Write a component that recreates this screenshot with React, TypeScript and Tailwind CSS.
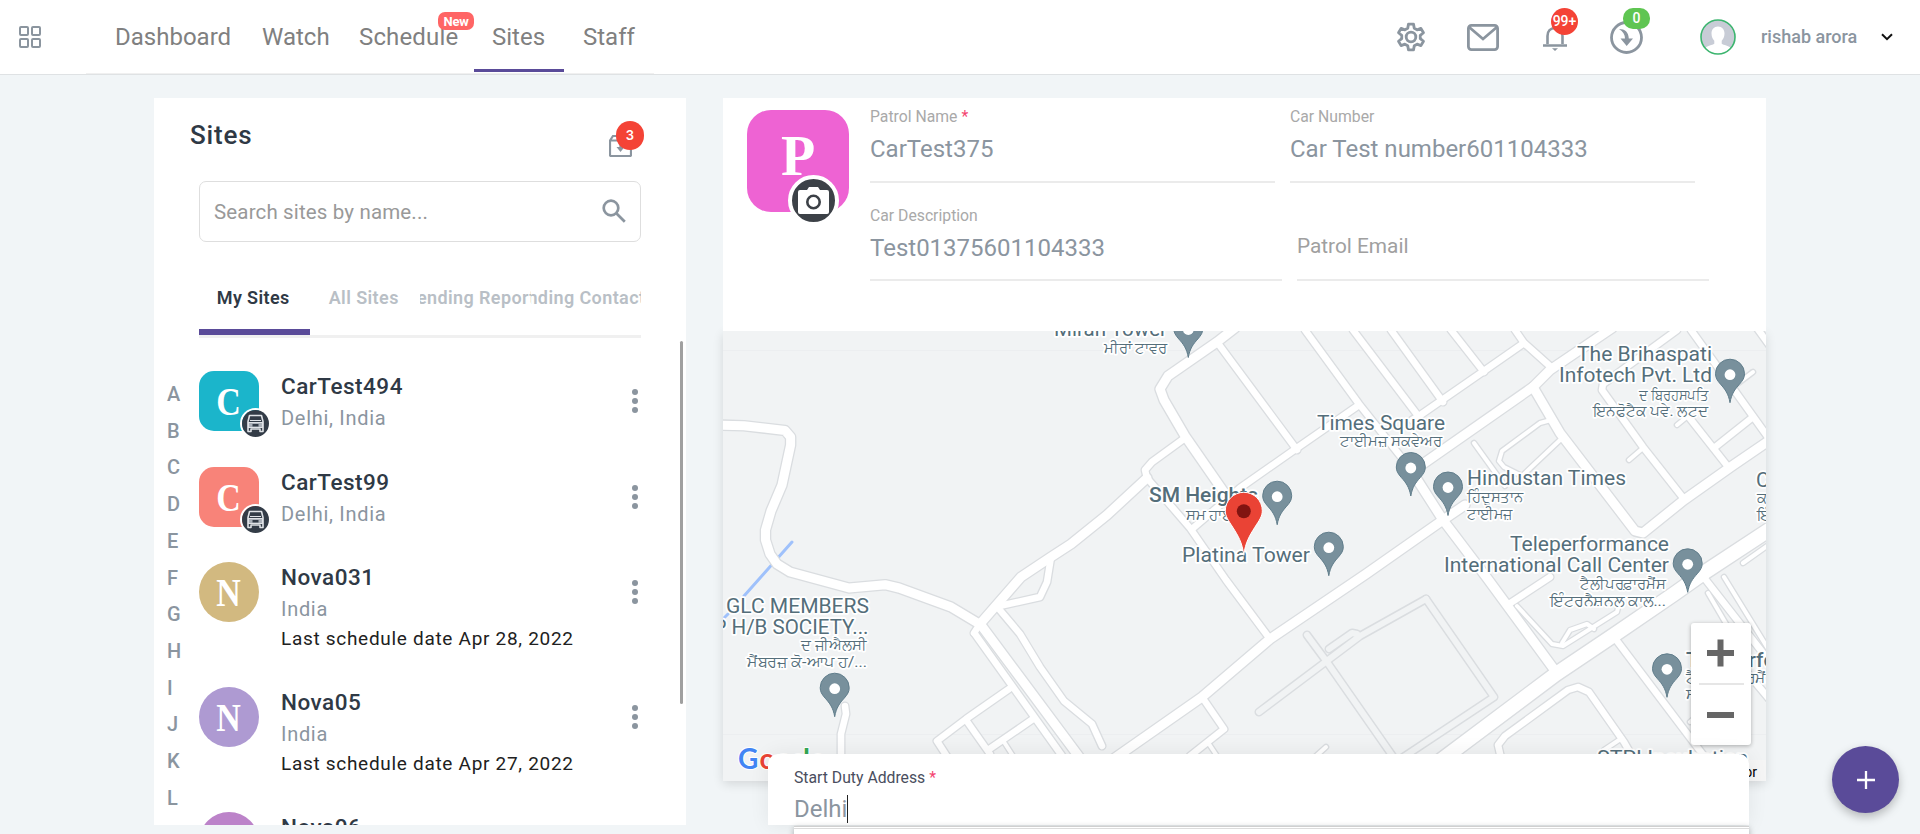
import React from "react";

const ROADS: { w: number; pts: string[] }[] = [
  {
    w: 4,
    pts: [
      "1474,443 1505,486",
      "1629,460 1643,448",
      "1677,425 1688,416",
      "1753,372 1737,384",
      "1743,563 1770,544",
      "1326,747 1316,756",
      "1560,430 1551,420 1540,423 1502,451 1499,461 1504,467 1522,476 1560,440",
      "1708,593 1732,634",
      "1724,577 1775,660",
      "1690,722 1706,708",
      "1604,750 1622,738",
      "1517,606 1552,644 1563,646 1617,612 1619,604",
      "1562,643 1570,630 1587,624 1594,629",
      "1209,744 1217,756",
      "1004,742 1013,756",
    ],
  },
  {
    w: 6.5,
    pts: [
      "845,706 846,714 841,734 841,760",
      "1009,689 966,719 937,741 948,758",
      "966,720 990,754",
      "1033,719 988,750",
      "1202,697 1224,729 1190,756",
      "995,607 1040,597 1047,582 1051,557",
      "999,609 1020,634 1040,667 1064,701 1092,724 1102,746",
      "975,634 1065,760",
      "980,624 974,633",
      "1185,438 1152,462 1145,470 1147,478",
      "1192,529 1240,488 1297,448 1359,405",
      "1217,342 1297,450",
      "1147,478 1190,528 1226,580 1270,639",
      "1305,330 1359,404 1409,467",
      "1353,330 1419,417",
      "1391,330 1443,402",
      "1451,330 1484,372",
      "1515,330 1524,343 1552,368",
      "1524,343 1481,373 1419,416 1412,420",
      "1677,330 1603,384 1602,390 1643,447 1684,499",
      "1691,330 1732,387 1770,440",
      "1688,416 1729,468",
      "1753,417 1714,448",
      "1757,328 1770,346",
      "1550,577 1509,604",
      "1614,637 1682,727 1704,756",
      "1501,758 1498,745 1505,736 1568,690 1578,687 1589,692 1624,742 1632,756",
      "1702,575 1770,662",
      "1720,640 1770,700",
    ],
  },
  {
    w: 9,
    pts: [
      "718,425 744,425.7 785,430.5 790.6,437 790.6,445 782,485 771,511 765.5,530 765.5,540 770,554 777,564 790,572 849,588 885,584.7 899,588 951,607 981,625",
      "1235,328 1217,342 1168,376 1160,389 1164,400 1185,436 1228,498",
      "980,624 1021,577 1051,557 1071,544 1107,515 1147,478",
      "981,625 1080,758",
      "1612,328 1550,370 1533,387 1420,466",
      "1533,387 1560,433 1635,531 1643,533 1684,500 1732,466 1770,440",
      "1409,467 1443,520 1487,578 1556,672",
      "1465,505 1443,520 1366,574 1270,639 1202,697 1112,760",
    ],
  },
  { w: 14, pts: ["1440,761 1556,674 1614,635 1674,594 1705,572 1775,526"] },
];

const LANES = [
  "1426,599 1360,636 1259,712",
  "1307,635 1327,662 1394,758",
  "1426,599 1494,697 1402,758",
  "1357,634 1352,633 1329,649",
];

const PINS: [number, number][] = [
  [1410.8, 468],
  [1448, 487.5],
  [1277.2, 496.7],
  [1328.8, 547.7],
  [1730, 374.7],
  [1687.7, 564.3],
  [834.7, 688.7],
  [1667, 669.3],
  [1188.3, 329.5],
];

type Label = { t: string; x: number; y: number; w?: number; s?: number; b?: boolean };
const LABELS: Label[] = [
  { t: "Miran Tower", x: 1054, y: 335.5, w: 113 },
  { t: "ਮੀਰਾਂ ਟਾਵਰ", x: 1104, y: 352.5, w: 63, s: 15 },
  { t: "SM Heights", x: 1149, y: 502, w: 109, b: true },
  { t: "ਸਮ ਹਾਈਟਸ", x: 1186, y: 519.5, w: 70, s: 15 },
  { t: "Platina Tower", x: 1182, y: 561.5, w: 128 },
  { t: "Times Square", x: 1317, y: 430, w: 128 },
  { t: "ਟਾਈਮਜ਼ ਸਕਵੇਅਰ", x: 1340, y: 446, w: 102, s: 15 },
  { t: "Hindustan Times", x: 1467, y: 485, w: 159 },
  { t: "ਹਿੰਦੁਸਤਾਨ", x: 1467, y: 502, w: 56, s: 15 },
  { t: "ਟਾਈਮਜ਼", x: 1467, y: 518.5, w: 46, s: 15 },
  { t: "The Brihaspati", x: 1577, y: 361, w: 135 },
  { t: "Infotech Pvt. Ltd", x: 1559, y: 382, w: 153 },
  { t: "ਦ ਬ੍ਰਿਹਸਪਤਿ", x: 1639, y: 399.5, w: 70, s: 15 },
  { t: "ਇਨਫੋਟੈਕ ਪਵੇ. ਲਟਦ", x: 1593, y: 416, w: 115, s: 15 },
  { t: "Teleperformance", x: 1510, y: 551, w: 159 },
  { t: "International Call Center", x: 1444, y: 572, w: 225 },
  { t: "ਟੈਲੀਪਰਫ਼ਾਰਮੈਂਸ", x: 1580, y: 589, w: 86, s: 15 },
  { t: "ਇੰਟਰਨੈਸ਼ਨਲ ਕਾਲ...", x: 1550, y: 605.5, w: 116, s: 15 },
  { t: "GLC MEMBERS", x: 726, y: 613, w: 143 },
  { t: "P", x: 713.5, y: 634 },
  { t: "H/B SOCIETY...", x: 731.5, y: 634, w: 137 },
  { t: "ਦ ਜੀਐਲਸੀ", x: 801, y: 650, w: 66, s: 15 },
  { t: "ਮੈਂਬਰਜ਼ ਕੋ-ਆਪ ਹ/...", x: 747, y: 667, w: 120, s: 15 },
  { t: "Co", x: 1756, y: 486.5 },
  { t: "ਕਨ", x: 1757, y: 503, s: 15 },
  { t: "ਇੰਡ", x: 1757, y: 520, s: 15 },
  { t: "Teleperformance", x: 1686, y: 666.5, w: 160, b: true },
  { t: "ਟੈਲੀਪਰਫ਼ਾਰਮੈਂਸ", x: 1686, y: 683, w: 90, s: 15 },
  { t: "ਸਰਵਿਸ", x: 1686, y: 699, s: 15 },
  { t: "STPI Incubation", x: 1597, y: 764.5, w: 151 },
];

function CityMap() {
  return (
    <svg viewBox="723 331 1043 450" width="1043" height="450" className="block">
      <rect x="723" y="331" width="1043" height="450" fill="#f1f3f4" />
      <path d="M723 350.5H1766M723 734.5H1766" stroke="#eceef0" />
      <g fill="none" stroke="#9fc1fb" strokeWidth="3" strokeLinecap="round">
        <path d="M792 542L744 596M728 614L724 618" />
      </g>
      <g fill="none" strokeLinejoin="round" strokeLinecap="round">
        {LANES.map((p) => (
          <polyline key={p} points={p} stroke="#dadde0" strokeWidth="9" />
        ))}
        {LANES.map((p) => (
          <polyline key={p} points={p} stroke="#f1f3f4" strokeWidth="6" />
        ))}
        {ROADS.map((r) =>
          r.pts.map((p) => <polyline key={p} points={p} stroke="#dadde0" strokeWidth={r.w + 2.6} />)
        )}
        {ROADS.map((r) => r.pts.map((p) => <polyline key={p} points={p} stroke="#ffffff" strokeWidth={r.w} />))}
      </g>
      {PINS.map(([x, y]) => (
        <g key={`${x}`} transform={`translate(${x} ${y})`}>
          <path
            d="M0 28C-1.500 19 -5 14.500 -9.500 9.500C-13 5.500 -14.500 3 -14.500 -1A14.500 14.500 0 0 1 14.500 -1C14.500 3 13 5.500 9.500 9.500C5 14.500 1.500 19 0 28Z"
            fill="#78909c"
            stroke="#607d8b"
            strokeWidth="1"
          />
          <circle r="5.400" fill="#fff" />
        </g>
      ))}
      <g
        fill="#546e7a"
        stroke="#fff"
        strokeWidth="3.500"
        strokeLinejoin="round"
        paintOrder="stroke"
        fontFamily="Roboto, 'Noto Sans', sans-serif"
      >
        {LABELS.map((l) => (
          <text
            key={`${l.x},${l.y}`}
            x={l.x}
            y={l.y}
            fontSize={l.s ?? 20.5}
            fontWeight={l.b ? 500 : 400}
            textLength={l.w}
            lengthAdjust="spacingAndGlyphs"
          >
            {l.t}
          </text>
        ))}
      </g>
      <g transform="translate(1243.800 511.300)">
        <path
          d="M0 44C-1.500 31 -6 24 -11 16C-15.500 9 -18.500 5 -18.500 -0.500A18.500 18.500 0 0 1 18.500 -0.500C18.500 5 15.500 9 11 16C6 24 1.500 31 0 44Z"
          fill="#ea4335"
          stroke="#fff"
          strokeWidth="1"
        />
        <circle r="7" fill="#811411" />
      </g>
      <text x="738" y="769" fontFamily="Lato, sans-serif" fontSize="28" stroke="#fff" strokeWidth="2" paintOrder="stroke">
        <tspan fill="#4285f4" fontWeight="700">G</tspan>
        <tspan fill="#ea4335" fontWeight="700" x="759.500">o</tspan>
        <tspan fill="#fbbc04">o</tspan>
        <tspan fill="#4285f4">g</tspan>
        <tspan fill="#34a853" fontWeight="700" x="803">l</tspan>
        <tspan fill="#ea4335">e</tspan>
      </text>
      <rect x="1600" y="760" width="166" height="21" fill="#f5f5f5" />
      <text x="1757" y="777" textAnchor="end" fontFamily="Roboto, sans-serif" fontSize="14" fill="#000">
        Report a map error
      </text>
    </svg>
  );
}

function CarIcon() {
  return (
    <svg viewBox="0 0 27 27" className="h-[27px] w-[27px]">
      <circle cx="13.5" cy="13.500" r="13.500" fill="#333c47" />
      <path
        d="M7.500 5.500h12l1.500 6v10h-3v-2.500h-9v2.500h-3v-10z"
        fill="none"
        stroke="#dfe2e6"
        strokeWidth="1.600"
        strokeLinejoin="round"
      />
      <path d="M8 10.500h11M6.500 12.500h14v5h-14z" stroke="#dfe2e6" strokeWidth="1.200" fill="#aab0b8" />
      <rect x="10.500" y="14" width="6" height="2.500" fill="#333c47" />
    </svg>
  );
}

type Site = { name: string; sub: string; last?: string; letter: string; tone: string; row: string; car?: boolean };
const SITES: Site[] = [
  { name: "CarTest494", sub: "Delhi, India", letter: "C", tone: "bg-[#1bb5cb] rounded-[15px]", row: "h-24", car: true },
  { name: "CarTest99", sub: "Delhi, India", letter: "C", tone: "bg-[#f88379] rounded-[15px]", row: "h-[95px]", car: true },
  { name: "Nova031", sub: "India", last: "Last schedule date Apr 28, 2022", letter: "N", tone: "bg-[#d2b980] rounded-full", row: "h-[125px]" },
  { name: "Nova05", sub: "India", last: "Last schedule date Apr 27, 2022", letter: "N", tone: "bg-[#ae9ad2] rounded-full", row: "h-[125px]" },
  { name: "Nova06", sub: "India", letter: "N", tone: "bg-[#bc83c9] rounded-full", row: "h-[125px]" },
];

function SiteRow({ s }: { s: Site }) {
  return (
    <div className={`flex shrink-0 ${s.row}`}>
      <div className={`relative flex h-[60px] w-[60px] shrink-0 items-center justify-center ${s.tone}`}>
        <span className="mt-0.5 scale-x-[0.85] pr-0.5 font-['Liberation_Serif',serif] text-[40px] font-bold leading-none text-white">
          {s.letter}
        </span>
        {s.car && (
          <div className="absolute -bottom-[8px] -right-[12px] rounded-full border-2 border-white">
            <CarIcon />
          </div>
        )}
      </div>
      <div className="ml-[22px] flex-1">
        <div className="text-[22.500px] font-medium leading-[30px] tracking-[0.5px] text-[#2f3945]">{s.name}</div>
        <div className="mt-[2px] text-[20px] leading-[30px] tracking-[0.7px] text-[#8b959f]">{s.sub}</div>
        {s.last && <div className="text-[19px] leading-[30px] tracking-[0.7px] text-[#212121]">{s.last}</div>}
      </div>
      <div className="mr-[3px] mt-[18px] flex flex-col gap-[3px]">
        <i className="h-1.5 w-1.5 rounded-full bg-[#8b959f]" />
        <i className="h-1.5 w-1.5 rounded-full bg-[#8b959f]" />
        <i className="h-1.5 w-1.5 rounded-full bg-[#8b959f]" />
      </div>
    </div>
  );
}

function Header() {
  return (
    <header className="flex h-[75px] shrink-0 border-b border-[#dfe2e4] bg-white">
      <div className="flex w-[86px] items-center pl-[19px]">
        <svg viewBox="0 0 22 22" className="h-[22px] w-[22px]" fill="none" stroke="#8b959f" strokeWidth="2">
          <rect x="1" y="1" width="8" height="8" rx="1" />
          <rect x="13" y="1" width="8" height="8" rx="1" />
          <rect x="1" y="13" width="8" height="8" rx="1" />
          <rect x="13" y="13" width="8" height="8" rx="1" />
        </svg>
      </div>
      <nav className="flex h-[74px] w-[568px] border-b border-[#f0f0f0] text-[24px] leading-[74px] text-[#808080]">
        <span className="ml-[29px] w-[147px]">Dashboard</span>
        <span className="w-[97px]">Watch</span>
        <span className="relative w-[115px] tracking-[0.15px]">
          Schedule
          <b className="absolute left-[79px] top-3 flex h-[18px] w-9 items-center justify-center rounded-[7px] bg-[#ff6565] text-[13px] font-bold leading-none tracking-tight text-white">
            New
          </b>
        </span>
        <span className="h-[72px] w-[90px] border-b-[3px] border-[#5a4b99] pr-px text-center">Sites</span>
        <span className="ml-[19px]">Staff</span>
      </nav>
      <div className="ml-auto flex items-center pr-[27px]">
        <svg viewBox="0 0 24 24" className="h-[34px] w-[34px]" fill="none" stroke="#8b959f" strokeWidth="2">
          <path
            strokeLinejoin="round"
            d="M10.2 2h3.600l.5 2.900 2 1.100 2.700-1.050 1.800 3.100-2.250 1.850v2.300l2.250 1.850-1.800 3.100-2.700-1.050-2 1.100-.5 2.900h-3.600l-.5-2.900-2-1.100-2.700 1.050-1.800-3.100 2.250-1.850v-2.300L3.200 8.050 5 4.950 7.700 6l2-1.100z"
            transform="translate(0 .95)"
          />
          <circle cx="12" cy="12" r="3.400" />
        </svg>
        <svg viewBox="0 0 32 27" className="ml-[39px] mr-[44px] h-[27px] w-8" fill="none" stroke="#8b959f" strokeWidth="2.800">
          <rect x="1.400" y="1.400" width="29.200" height="24.200" rx="3" />
          <path d="M2 3l14 12L30 3" />
        </svg>
        <div className="relative h-[27px] w-6">
          <svg viewBox="0 0 24 27" className="h-[27px] w-6" fill="none" stroke="#8b959f" strokeWidth="2.600">
            <path d="M4.500 20v-8c0-5 3-8 7.500-8s7.500 3 7.500 8v8M0 21.500h24" />
            <path d="M9 24.300h6l-3 2.700z" fill="#8b959f" stroke="none" />
          </svg>
          <b className="absolute -top-[16px] left-2 flex h-[27px] w-[27px] items-center justify-center rounded-full bg-[#f44336] text-[14px] font-medium text-white">
            99+
          </b>
        </div>
        <div className="relative ml-[43px] h-[33px] w-[33px]">
          <svg viewBox="0 0 33 33" className="h-[33px] w-[33px]">
            <circle cx="16.500" cy="16.500" r="15" fill="none" stroke="#8b959f" strokeWidth="2.800" />
            <path d="M9 8c6 0 9.500 3 9.800 9.500h4.200l-6.300 7.500-6.200-7.500h4.500c0-4-2-7-6-9.500z" fill="#8b959f" />
          </svg>
          <b className="absolute -top-[13px] left-[13px] flex h-[21px] w-[27px] items-center justify-center rounded-[10px] bg-[#5fc552] text-[14px] font-medium text-white">
            0
          </b>
        </div>
        <svg viewBox="0 0 36 36" className="ml-[57px] h-9 w-9">
          <circle cx="18" cy="18" r="17" fill="#c8ccd6" />
          <path
            d="M18 7.500c4 0 6.500 3 6.500 7 0 3.500-1.500 6-2.800 7.300v3c2 1.500 7 1.700 8.800 4.200C27 33 23 35 18 35s-9-2-12.500-6c1.800-2.500 6.800-2.700 8.800-4.200v-3c-1.300-1.300-2.800-3.800-2.800-7.300 0-4 2.500-7 6.500-7z"
            fill="#fff"
          />
          <circle cx="18" cy="18" r="17" fill="none" stroke="#3cb56f" strokeWidth="1.600" />
        </svg>
        <span className="-mt-px ml-[25px] w-[96px] whitespace-nowrap text-[18px] font-medium text-[#8b959f]">rishab arora</span>
        <svg viewBox="0 0 12 8" className="ml-[24px] h-2 w-3" fill="none" stroke="#111" strokeWidth="2">
          <path d="M1 1.200l5 5 5-5" />
        </svg>
      </div>
    </header>
  );
}

function Field({ label, value, required, className }: { label: string; value: string; required?: boolean; className: string }) {
  return (
    <div className={`border-b-2 border-[#ebebeb] ${className}`}>
      <div className="text-[15.750px] leading-[20px] text-[#a9a9a9]">
        {label} {required && <span className="text-[#f44370]">*</span>}
      </div>
      <div className="mt-[8px] text-[24px] leading-[28px] text-[#8b959f]">{value}</div>
    </div>
  );
}

export default function App() {
  return (
    <div className="relative flex h-[834px] w-[1920px] flex-col overflow-hidden bg-[#f1f5f7] font-['Roboto',sans-serif]">
      <Header />
      <main className="flex pl-[154px] pt-[23px]">
        <section className="relative flex h-[727px] w-[532px] flex-col overflow-hidden bg-white">
          <div className="flex h-[83px] shrink-0 justify-between pl-9 pr-[54px] pt-[17px]">
            <h1 className="text-[26px] font-medium leading-[41px] tracking-[0.8px] text-[#2f3945]">Sites</h1>
            <div className="relative mt-[20px] h-[22px] w-[23px]">
              <svg viewBox="0 0 23 22" className="h-[22px] w-[23px]" fill="none" stroke="#8b959f" strokeWidth="2.200">
                <path d="M1 5.500V20a1 1 0 0 0 1 1h19a1 1 0 0 0 1-1V5.500M1 5.500L4 1h15l3 4.500zM11.500 9v3" />
                <path d="M7.500 12h8l-4 5z" fill="#8b959f" stroke="none" />
              </svg>
              <b className="absolute -top-[14px] left-[7px] flex h-[29px] w-[28px] items-center justify-center rounded-full bg-[#f44336] font-['Inter',sans-serif] text-[13px] font-semibold text-white">
                3
              </b>
            </div>
          </div>
          <div className="ml-[45px] flex h-[61px] w-[442px] shrink-0 items-center justify-between rounded-[7px] border border-[#dedede] pl-[14px] pr-[14px]">
            <span className="mt-[2px] text-[20.500px] tracking-[0.15px] text-[#999]">Search sites by name...</span>
            <svg viewBox="0 0 24 24" className="mb-px h-6 w-6" fill="none" stroke="#8b959f" strokeWidth="2.700">
              <circle cx="9" cy="9" r="7.300" />
              <path d="M14.300 14.300l8.500 8.500" />
            </svg>
          </div>
          <div className="ml-[45px] mt-[27px] w-[442px] shrink-0 border-b-[3px] border-[#f0f0f0]">
            <div className="grid grid-cols-4 text-[18px] font-semibold tracking-[0.4px] text-[#b9bfc6]">
              <div className="flex h-[66px] items-center justify-center border-b-[6px] border-[#5a4b99] pb-[3px] pr-[2px] text-[#2f3945]">My Sites</div>
              <div className="flex h-[60px] items-center justify-center pb-[3px] pr-[2px]">All Sites</div>
              <div className="flex h-[60px] min-w-0 items-center justify-center overflow-hidden whitespace-nowrap pb-[3px]">Pending Reports</div>
              <div className="flex h-[60px] min-w-0 items-center justify-center overflow-hidden whitespace-nowrap pb-[3px] pr-[11px]">Pending Contacts</div>
            </div>
          </div>
          <div className="flex min-h-0 flex-1 overflow-hidden">
            <div className="flex w-[45px] shrink-0 flex-col pl-[13px] pt-[38px] text-[20px] font-medium leading-[36.700px] text-[#8b959f]">
              {"ABCDEFGHIJKL".split("").map((c) => (
                <span key={c}>{c}</span>
              ))}
            </div>
            <div className="flex w-[442px] flex-col pt-[33px]">
              {SITES.map((s) => (
                <SiteRow key={s.name} s={s} />
              ))}
            </div>
            <div className="ml-auto mr-[3px] mt-[3px] h-[363px] w-[3px] rounded bg-[#a0a0a0]" />
          </div>
        </section>

        <section className="ml-[37px] w-[1043px]">
          <div className="relative z-10 flex h-[233px] bg-white pl-6 pt-3">
            <div className="relative flex h-[102px] w-[102px] justify-center rounded-[24px] bg-[#ee63d3]">
              <span className="mt-[18px] font-['Liberation_Serif',serif] text-[56px] font-bold leading-none text-white">P</span>
              <div className="absolute -bottom-[14px] left-[41px] flex h-[51px] w-[51px] items-center justify-center rounded-full border-4 border-white bg-[#3c4147]">
                <svg viewBox="0 0 31 27" className="h-[27px] w-[31px]">
                  <path d="M2 3h7l2-3h9l2 3h7a2 2 0 0 1 2 2v20a2 2 0 0 1-2 2H2a2 2 0 0 1-2-2V5a2 2 0 0 1 2-2z" fill="#fff" />
                  <circle cx="15.500" cy="15" r="6.200" fill="#fff" stroke="#3c4147" strokeWidth="2.600" />
                </svg>
              </div>
            </div>
            <div className="ml-[21px] flex flex-col">
              <div className="flex gap-[15px]">
                <Field label="Patrol Name" value="CarTest375" required className="h-[77px] w-[405px] pt-px -mt-[4px]" />
                <Field label="Car Number" value="Car Test number601104333" className="h-[77px] w-[405px] pt-px -mt-[4px]" />
              </div>
              <div className="mt-[22px] flex gap-[15px]">
                <Field label="Car Description" value="Test01375601104333" className="h-[76px] w-[412px] pt-px" />
                <div className="h-[76px] w-[412px] border-b-2 border-[#ebebeb] pt-[27px] text-[20.800px] leading-[28px] text-[#a0a0a0]">
                  Patrol Email
                </div>
              </div>
            </div>
          </div>
          <div className="relative h-[450px] shadow-[0_3px_10px_rgba(0,0,0,0.12)]">
            <CityMap />
            <div className="absolute right-[15px] top-[292px] flex h-[122px] w-[60px] flex-col items-center rounded-[3px] bg-white shadow-[0_1px_4px_rgba(0,0,0,0.3)]">
              <svg viewBox="0 0 60 122" className="h-[122px] w-[60px]">
                <path d="M16 30h27M29.500 16.500v27M16 92h27" stroke="#666" strokeWidth="6" />
                <path d="M8 61h45" stroke="#e6e6e6" strokeWidth="2" />
              </svg>
            </div>
          </div>
        </section>
      </main>

      <div className="absolute left-[768px] top-[754px] z-10 h-[71px] w-[981px] rounded-t-[10px] bg-white pl-[26px] pt-[14px] shadow-[0_0_20px_rgba(0,0,0,0.07)]">
        <div className="text-[15.750px] leading-[20px] text-[#4a4e5e]">
          Start Duty Address <span className="text-[#f44370]">*</span>
        </div>
        <div className="mt-[7px] flex items-center text-[24px] leading-[28px] text-[#8b959f]">
          Delhi
          <i className="h-7 w-px bg-[#222]" />
        </div>
      </div>
      <div className="absolute left-[794px] top-[826px] z-10 h-[20px] w-[955px] border-t border-[#d0d0d0] bg-white shadow-[0_2px_6px_rgba(0,0,0,0.3)]">
        <div className="mt-px border-t border-[#dcdcdc]" />
      </div>
      <button className="absolute left-[1832px] top-[746px] flex h-[67px] w-[67px] items-center justify-center rounded-full bg-[#5a4b99] shadow-[0_4px_10px_rgba(0,0,0,0.25)]">
        <svg viewBox="0 0 18 18" className="h-[18px] w-[18px]" stroke="#fff" strokeWidth="2.300">
          <path d="M0 9h18M9 0v18" />
        </svg>
      </button>
    </div>
  );
}
